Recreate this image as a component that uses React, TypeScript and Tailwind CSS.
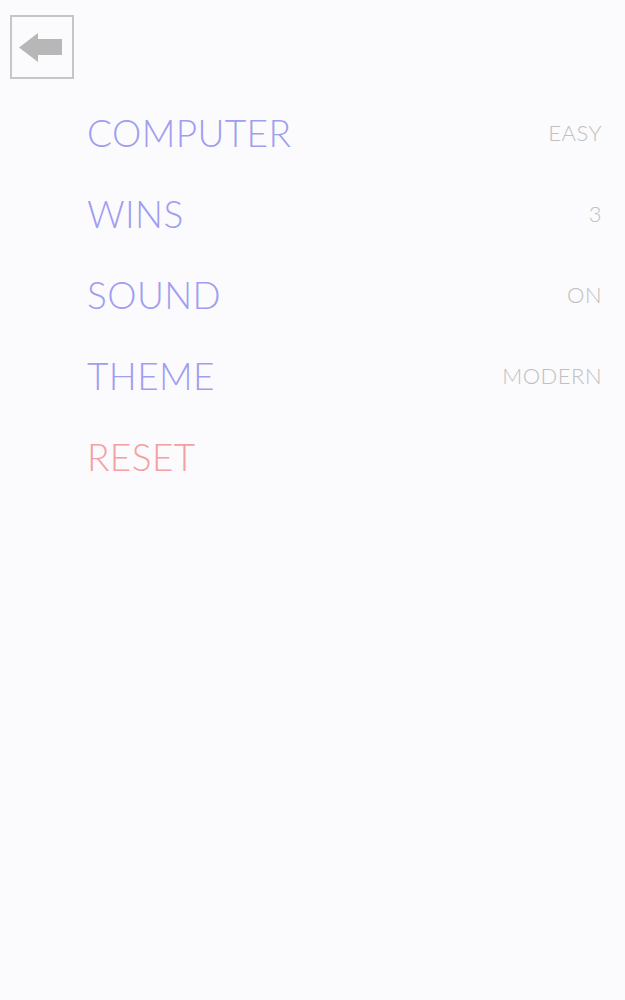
import { useState } from "react";

const settings = [
  { label: "COMPUTER", value: "EASY" },
  { label: "WINS", value: "3" },
  { label: "SOUND", value: "ON" },
  { label: "THEME", value: "MODERN" },
];

function BackArrow() {
  return (
    <svg viewBox="0 0 60 60" className="h-full w-full">
      <path d="M7 30.5 L26 16 L26 22 L50 22 L50 38 L26 38 L26 45 Z" fill="#b7b7b7" />
    </svg>
  );
}

export default function App() {
  const [items] = useState(settings);

  return (
    <div className="min-h-[1000px] w-full bg-[#fbfafd] font-['Lato','Liberation_Sans',sans-serif] font-light">
      <div className="pl-[10px] pt-[15px]">
        <button
          type="button"
          aria-label="Back"
          className="block h-[64px] w-[64px] border-2 border-[#c6c6c6] bg-transparent"
        >
          <BackArrow />
        </button>
      </div>

      <ul className="mt-[13px] pl-[87px] pr-[23px]">
        {items.map((item) => (
          <li key={item.label} className="flex h-[81px] items-center justify-between">
            <span className="text-[37px] leading-none tracking-[0.4px] text-[#9f9ef0]">{item.label}</span>
            <span className="text-[22px] leading-none tracking-[0.5px] text-[#c0c0c0]">{item.value}</span>
          </li>
        ))}
        <li className="flex h-[81px] items-center">
          <span className="text-[37px] leading-none tracking-[0.4px] text-[#f4a0a0]">RESET</span>
        </li>
      </ul>
    </div>
  );
}
